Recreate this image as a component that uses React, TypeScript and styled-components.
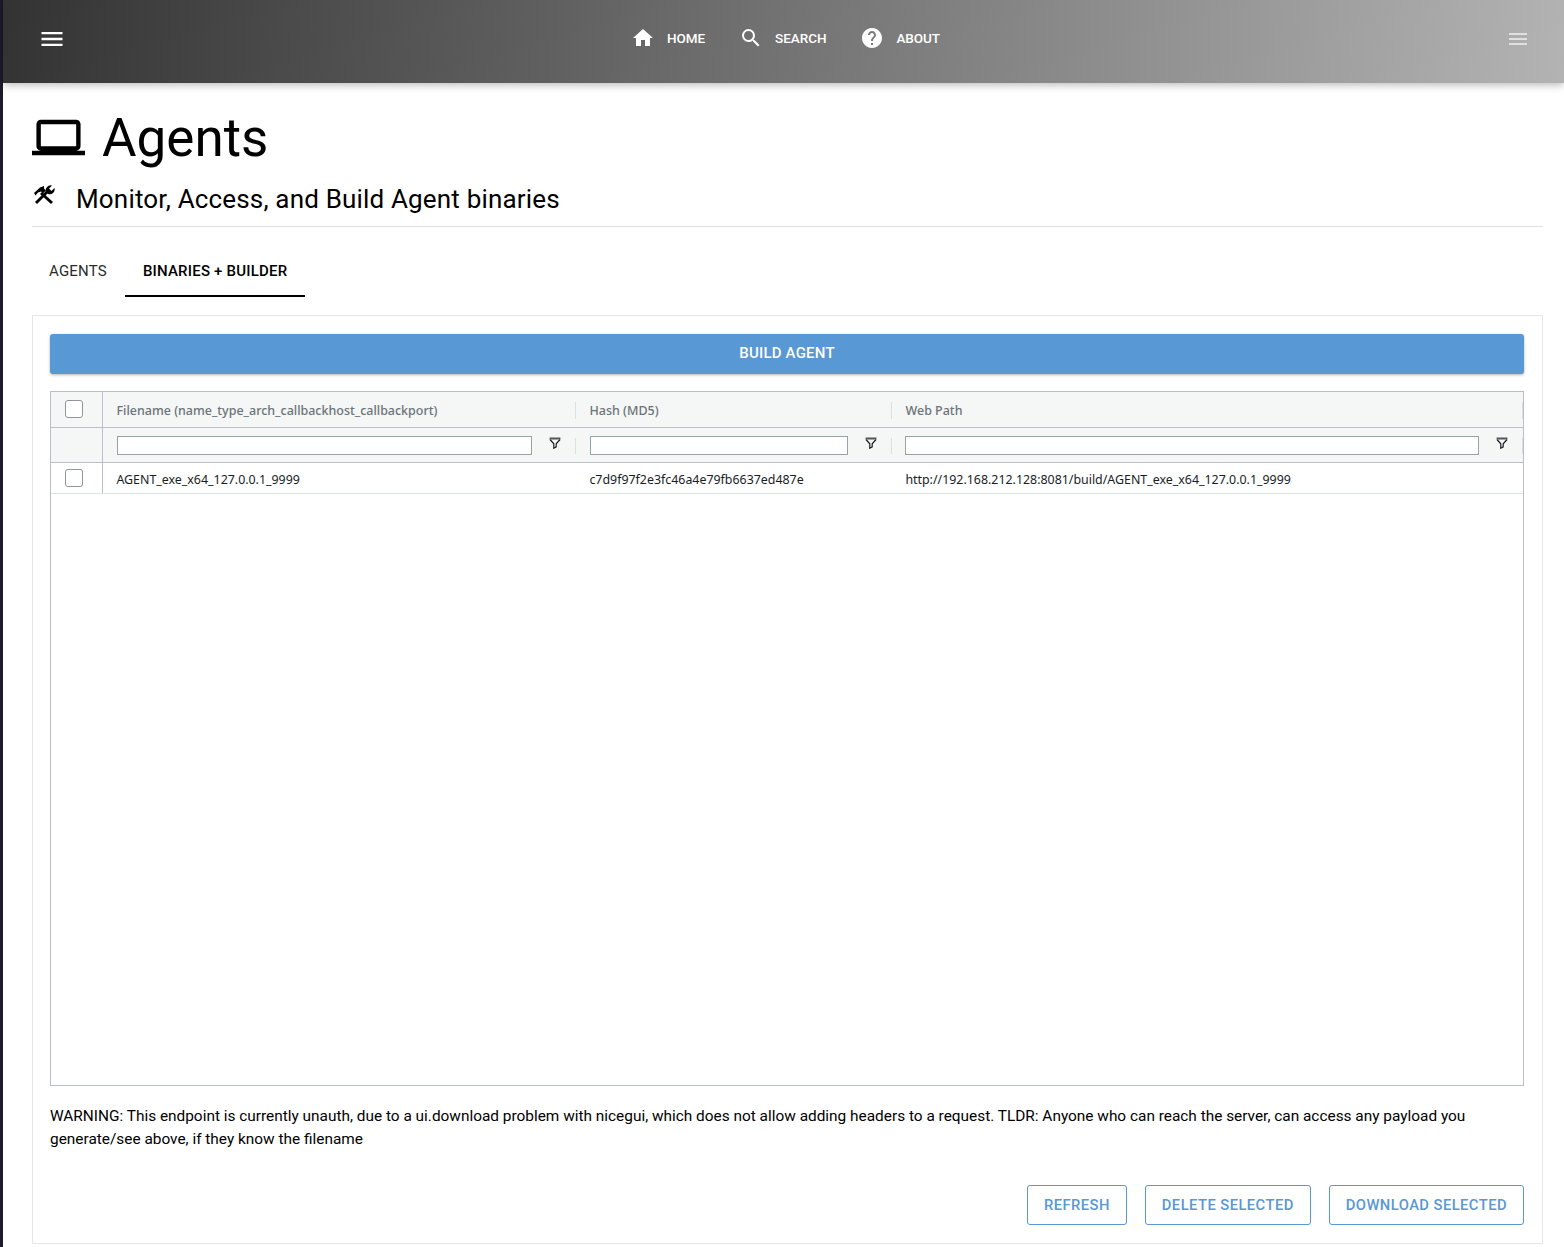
import React from "react";
import styled, { createGlobalStyle } from "styled-components";

const Global = createGlobalStyle`
  html, body { margin: 0; padding: 0; background: #fff; }
  body { font-family: Roboto, "Liberation Sans", sans-serif; color: #000; }
  * { box-sizing: border-box; }
`;

const Page = styled.div`
  width: 1564px;
  height: 1247px;
  overflow: hidden;
  display: flex;
  background: #fff;
`;
const Strip = styled.div`
  width: 3px;
  flex: none;
  background: #1d1a2b;
`;
const Main = styled.div`
  flex: 1;
  min-width: 0;
  display: flex;
  flex-direction: column;
`;
const Header = styled.header`
  position: relative;
  z-index: 2;
  height: 83px;
  flex: none;
  display: flex;
  align-items: center;
  justify-content: space-between;
  padding: 0 34px 6px 35px;
  background: linear-gradient(98deg, #333333 0%, #b3b3b3 100%);
  box-shadow: 0 2px 8px rgba(0, 0, 0, 0.28);
`;
const Menu = styled.svg<{ $dim?: boolean }>`
  width: ${(p) => (p.$dim ? 24 : 28)}px;
  height: ${(p) => (p.$dim ? 24 : 28)}px;
  fill: #fff;
  opacity: ${(p) => (p.$dim ? 0.62 : 1)};
  display: block;
`;
const Nav = styled.nav`
  display: flex;
  align-items: center;
  gap: 34px;
  margin-left: -1px;
  margin-bottom: 2px;
`;
const NavItem = styled.div`
  display: flex;
  align-items: center;
  gap: 12px;
  color: #fff;
  font-size: 13.5px;
  font-weight: 500;
  letter-spacing: -0.05px;
`;
const NavIcon = styled.svg`
  width: 24px;
  height: 24px;
  fill: #fff;
  display: block;
`;
const Content = styled.main`
  flex: 1;
  min-height: 0;
  padding: 21px 21px 3px 29px;
  display: flex;
  flex-direction: column;
`;
const TitleRow = styled.div`
  display: flex;
  align-items: center;
  height: 68px;
  gap: 17px;
  font-size: 53px;
  line-height: 68px;
`;
const LaptopIcon = styled.svg`
  width: 53px;
  height: 53px;
  display: block;
  fill: #000;
  margin-top: -1px;
`;
const SubRow = styled.div`
  display: flex;
  height: 55px;
  padding-top: 11px;
  border-bottom: 1px solid #e0e0e0;
  font-size: 26px;
  letter-spacing: 0.17px;
  line-height: 32px;
  gap: 20px;
`;
const ToolIcon = styled.svg`
  width: 24px;
  height: 20px;
  flex: none;
  display: block;
  fill: #000;
  margin-top: 2px;
`;
const Tabs = styled.div`
  display: flex;
  height: 70px;
  margin-left: -1px;
`;
const Tab = styled.div<{ $active?: boolean }>`
  height: 70px;
  padding: 20px 18px 0;
  display: flex;
  align-items: center;
  font-size: 15px;
  letter-spacing: 0.2px;
  font-weight: ${(p) => (p.$active ? 500 : 400)};
  color: ${(p) => (p.$active ? "#000" : "#2b2b2b")};
  border-bottom: 2px solid ${(p) => (p.$active ? "#000" : "transparent")};
`;
const Card = styled.section`
  margin-top: 18px;
  flex: 1;
  min-height: 0;
  border: 1px solid #e6e6e6;
  padding: 18px 18px 18px 17px;
  display: flex;
  flex-direction: column;
`;
const BuildButton = styled.div`
  height: 40px;
  flex: none;
  padding-bottom: 2px;
  background: #5898d4;
  color: #fff;
  border-radius: 3px;
  font-size: 15px;
  letter-spacing: 0.2px;
  font-weight: 500;
  display: flex;
  align-items: center;
  justify-content: center;
  box-shadow: 0 1px 3px rgba(0, 0, 0, 0.3);
`;
const Grid = styled.div`
  margin-top: 17px;
  height: 695px;
  flex: none;
  border: 1px solid #babfc7;
  font-family: "Noto Sans", "Open Sans", sans-serif;
  font-size: 12.4px;
  color: #181d1f;
  display: flex;
  flex-direction: column;
`;
const GridRow = styled.div<{ $h: number; $head?: boolean; $line: string }>`
  display: grid;
  grid-template-columns: 52px 473px 316px 1fr;
  height: ${(p) => p.$h}px;
  flex: none;
  background: ${(p) => (p.$head ? "#f5f6f6" : "#fff")};
  border-bottom: 1px solid ${(p) => p.$line};
`;
const CheckCell = styled.div<{ $head?: boolean }>`
  display: flex;
  justify-content: center;
  align-items: center;
  padding-right: 6px;
  padding-bottom: ${(p) => (p.$head ? 2 : 0)}px;
  border-right: 1px solid #babfc7;
`;
const CheckBox = styled.span`
  width: 18px;
  height: 18px;
  border: 1.5px solid #8f9699;
  border-radius: 3px;
  background: #fff;
  display: block;
`;
const Cell = styled.div`
  position: relative;
  padding: 0 13px;
  display: flex;
  align-items: center;
  white-space: nowrap;
  min-width: 0;
`;
const HeadCell = styled(Cell)`
  color: #6b7478;
  font-size: 12.47px;
  font-weight: 500;
  padding-top: 2px;
  padding-left: 13.5px;
  &::after {
    content: "";
    position: absolute;
    right: 0;
    top: 10px;
    height: 17px;
    width: 1px;
    background: #dcdfe2;
  }
`;
const FilterCell = styled(Cell)`
  gap: 17px;
  padding-left: 14px;
  padding-right: 15px;
  padding-bottom: 2px;
  &:last-child {
    padding-left: 13px;
  }
  &::after {
    content: "";
    position: absolute;
    right: 0;
    top: 10px;
    height: 16px;
    width: 1px;
    background: #dcdfe2;
  }
`;
const FilterInput = styled.div`
  flex: 1;
  height: 19px;
  margin-top: 3px;
  border: 1px solid #95a5a6;
  background: #fff;
`;
const FilterIcon = styled.svg`
  width: 12px;
  height: 12px;
  flex: none;
  display: block;
  margin-top: -3px;
`;
const DataCell = styled(Cell)`
  padding-top: 2px;
  padding-left: 13.4px;
`;
const Warning = styled.p`
  margin: 19px 0 0;
  font-size: 15.4px;
  line-height: 23px;
`;
const Actions = styled.div`
  margin-top: 34px;
  display: flex;
  justify-content: flex-end;
  gap: 18px;
`;
const OutlineButton = styled.div`
  height: 40px;
  padding: 0 16px;
  display: flex;
  align-items: center;
  color: #5898d4;
  border: 1px solid #5898d4;
  border-radius: 3px;
  font-size: 14.74px;
  font-weight: 500;
  letter-spacing: 0.45px;
`;

const MenuGlyph = ({ dim }: { dim?: boolean }) => (
  <Menu $dim={dim} viewBox="0 0 24 24">
    <path d="M3 18h18v-2H3v2zm0-5h18v-2H3v2zm0-7v2h18V6H3z" />
  </Menu>
);

const Filter = () => (
  <FilterIcon viewBox="0 0 12 12">
    <path d="M1 2.5L4.8 6.8V11.2L7.2 9.8V6.8L11 2.5" fill="none" stroke="#181d1f" strokeWidth="1.2" />
    <path d="M.6 1.5h10.8" stroke="#555" strokeWidth="2" />
  </FilterIcon>
);

const columns = [
  { head: "Filename (name_type_arch_callbackhost_callbackport)", value: "AGENT_exe_x64_127.0.0.1_9999" },
  { head: "Hash (MD5)", value: "c7d9f97f2e3fc46a4e79fb6637ed487e" },
  { head: "Web Path", value: "http://192.168.212.128:8081/build/AGENT_exe_x64_127.0.0.1_9999" },
];

export default function App() {
  return (
    <Page>
      <Global />
      <Strip />
      <Main>
        <Header>
          <MenuGlyph />
          <Nav>
            <NavItem>
              <NavIcon viewBox="0 0 24 24">
                <path d="M10 20v-6h4v6h5v-8h3L12 3 2 12h3v8z" />
              </NavIcon>
              HOME
            </NavItem>
            <NavItem>
              <NavIcon viewBox="0 0 24 24">
                <path d="M15.5 14h-.79l-.28-.27A6.471 6.471 0 0 0 16 9.5 6.5 6.5 0 1 0 9.5 16c1.61 0 3.09-.59 4.23-1.57l.27.28v.79l5 4.99L20.49 19l-4.99-5zm-6 0C7.01 14 5 11.99 5 9.5S7.01 5 9.5 5 14 7.01 14 9.5 11.99 14 9.5 14z" />
              </NavIcon>
              SEARCH
            </NavItem>
            <NavItem>
              <NavIcon viewBox="0 0 24 24">
                <path d="M12 2C6.48 2 2 6.48 2 12s4.48 10 10 10 10-4.48 10-10S17.52 2 12 2zm1 17h-2v-2h2v2zm2.07-7.75l-.9.92C13.45 12.9 13 13.5 13 15h-2v-.5c0-1.1.45-2.1 1.17-2.83l1.24-1.26c.37-.36.59-.86.59-1.41 0-1.1-.9-2-2-2s-2 .9-2 2H8c0-2.21 1.79-4 4-4s4 1.79 4 4c0 .88-.36 1.68-.93 2.25z" />
              </NavIcon>
              ABOUT
            </NavItem>
          </Nav>
          <MenuGlyph dim />
        </Header>
        <Content>
          <TitleRow>
            <LaptopIcon viewBox="0 0 24 24">
              <path d="M20 18c1.1 0 1.99-.9 1.99-2L22 6c0-1.1-.9-2-2-2H4c-1.1 0-2 .9-2 2v10c0 1.1.9 2 2 2H0v2h24v-2h-4zM4 6h16v10H4V6z" />
            </LaptopIcon>
            Agents
          </TitleRow>
          <SubRow>
            <ToolIcon viewBox="0 0 24 20">
              <path d="M2 8L8 2.5l4-1.5v2.5l2 2-3 3-2-2-3 1-2.5 3z" />
              <path d="M10 7l11 10-2 2L8 9z" />
              <path d="M15 5l2 2L5 19l-2-2z" />
              <path d="M14 7a5 5 0 0 1 6-6.5l-3 3 2.5 2.5 3-3a5 5 0 0 1-6.5 6z" />
            </ToolIcon>
            Monitor, Access, and Build Agent binaries
          </SubRow>
          <Tabs>
            <Tab>AGENTS</Tab>
            <Tab $active>BINARIES + BUILDER</Tab>
          </Tabs>
          <Card>
            <BuildButton>BUILD AGENT</BuildButton>
            <Grid>
              <GridRow $h={36} $head $line="#babfc7">
                <CheckCell $head>
                  <CheckBox />
                </CheckCell>
                {columns.map((c) => (
                  <HeadCell key={c.head}>{c.head}</HeadCell>
                ))}
              </GridRow>
              <GridRow $h={35} $head $line="#babfc7">
                <CheckCell $head />
                {columns.map((c) => (
                  <FilterCell key={c.head}>
                    <FilterInput />
                    <Filter />
                  </FilterCell>
                ))}
              </GridRow>
              <GridRow $h={31} $line="#dde2eb">
                <CheckCell>
                  <CheckBox />
                </CheckCell>
                {columns.map((c) => (
                  <DataCell key={c.head}>{c.value}</DataCell>
                ))}
              </GridRow>
            </Grid>
            <Warning>
              WARNING: This endpoint is currently unauth, due to a ui.download problem with nicegui, which does not allow
              adding headers to a request. TLDR: Anyone who can reach the server, can access any payload you generate/see
              above, if they know the filename
            </Warning>
            <Actions>
              <OutlineButton>REFRESH</OutlineButton>
              <OutlineButton>DELETE SELECTED</OutlineButton>
              <OutlineButton>DOWNLOAD SELECTED</OutlineButton>
            </Actions>
          </Card>
        </Content>
      </Main>
    </Page>
  );
}
